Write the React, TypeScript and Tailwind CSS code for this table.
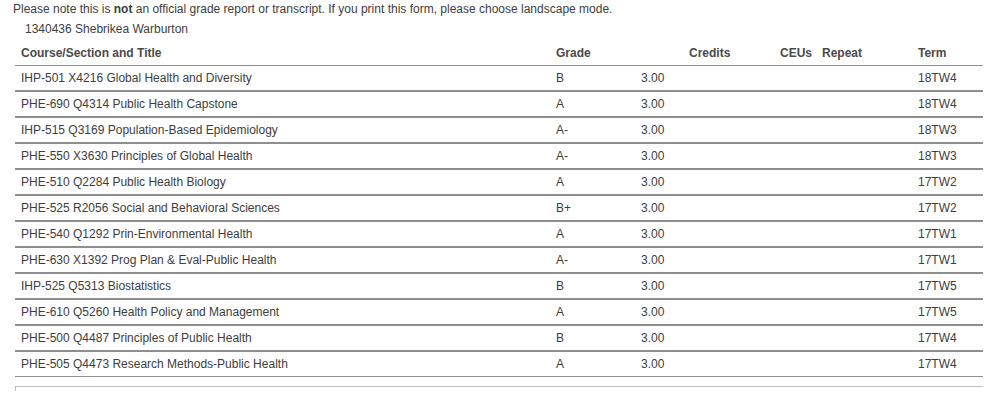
import React from "react";

const rows: [string, string, string, string][] = [
  ["IHP-501 X4216 Global Health and Diversity", "B", "3.00", "18TW4"],
  ["PHE-690 Q4314 Public Health Capstone", "A", "3.00", "18TW4"],
  ["IHP-515 Q3169 Population-Based Epidemiology", "A-", "3.00", "18TW3"],
  ["PHE-550 X3630 Principles of Global Health", "A-", "3.00", "18TW3"],
  ["PHE-510 Q2284 Public Health Biology", "A", "3.00", "17TW2"],
  ["PHE-525 R2056 Social and Behavioral Sciences", "B+", "3.00", "17TW2"],
  ["PHE-540 Q1292 Prin-Environmental Health", "A", "3.00", "17TW1"],
  ["PHE-630 X1392 Prog Plan & Eval-Public Health", "A-", "3.00", "17TW1"],
  ["IHP-525 Q5313 Biostatistics", "B", "3.00", "17TW5"],
  ["PHE-610 Q5260 Health Policy and Management", "A", "3.00", "17TW5"],
  ["PHE-500 Q4487 Principles of Public Health", "B", "3.00", "17TW4"],
  ["PHE-505 Q4473 Research Methods-Public Health", "A", "3.00", "17TW4"],
];

export default function App() {
  return (
    <div
      className="w-[984px] h-[400px] bg-white text-[12px] text-[#3d3d3d] overflow-hidden"
      style={{ fontFamily: '"Liberation Sans", Arial, sans-serif' }}
    >
      <div className="pt-[1px] pl-[13px] leading-[16px]">
        Please note this is <b>not</b> an official grade report or transcript. If you print this form, please choose landscape mode.
      </div>
      <div className="mt-[4px] pl-[25px] leading-[16px]">1340436 Shebrikea Warburton</div>
      <div className="ml-[15px] mr-[1px] mt-[4px]">
        <div className="flex h-[25px] items-center border-b border-[#8e8e8e] font-bold text-[#4a4a4a]">
          <div className="w-[534px] pl-[6px]">Course/Section and Title</div>
          <div className="w-[134px] pl-[7px]">Grade</div>
          <div className="w-[90px] pl-[6px]">Credits</div>
          <div className="w-[43px] pl-[7px]">CEUs</div>
          <div className="w-[96px] pl-[6px]">Repeat</div>
          <div className="flex-1 pl-[6px]">Term</div>
        </div>
        {rows.map((r, i) => (
          <div
            key={i}
            className={
              "flex items-center border-[#8e8e8e] " +
              (i === rows.length - 1 ? "h-[25px] border-b" : "h-[26px] border-b-2")
            }
          >
            <div className="w-[534px] pl-[6px]">{r[0]}</div>
            <div className="w-[86px] pl-[7px]">{r[1]}</div>
            <div className="w-[277px] pl-[6px]">{r[2]}</div>
            <div className="flex-1 pl-[6px]">{r[3]}</div>
          </div>
        ))}
        <div className="mt-[9px] h-[5px] border-t border-l border-[#bdbdbd]" />
      </div>
    </div>
  );
}
